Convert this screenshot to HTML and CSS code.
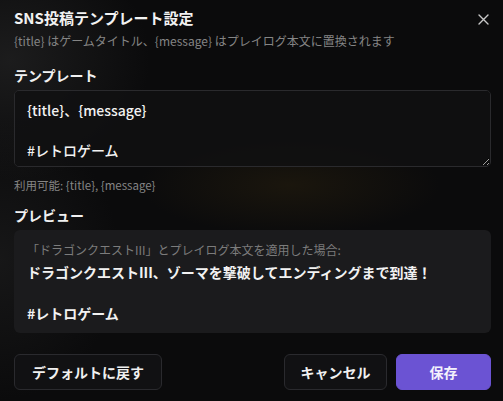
FILE: index.html
```html
<!DOCTYPE html>
<html lang="ja">
<head>
<meta charset="utf-8">
<title>SNS投稿テンプレート設定</title>
<link rel="stylesheet" href="styles.css">
</head>
<body>
<div class="dialog">
  <header class="head">
    <div class="head-text">
      <h1 class="title">SNS投稿テンプレート設定</h1>
      <p class="subtitle">{title} はゲームタイトル、{message} はプレイログ本文に置換されます</p>
    </div>
    <button class="close" aria-label="閉じる">
      <svg width="11" height="11" viewBox="0 0 11 11"><path d="M1 1L10 10M10 1L1 10" stroke="#c8c8c8" stroke-width="1.4" stroke-linecap="round"/></svg>
    </button>
  </header>

  <section class="field">
    <h2 class="label">テンプレート</h2>
    <textarea class="template">{title}、{message}

#レトロゲーム</textarea>
    <p class="hint">利用可能: {title}, {message}</p>
  </section>

  <section class="field">
    <h2 class="label preview-label">プレビュー</h2>
    <div class="preview">
      <p class="preview-note">「ドラゴンクエストIII」とプレイログ本文を適用した場合:</p>
      <p class="preview-body">ドラゴンクエストIII、ゾーマを撃破してエンディングまで到達！<br><br>#レトロゲーム</p>
    </div>
  </section>

  <footer class="actions">
    <button class="btn">デフォルトに戻す</button>
    <div class="right">
      <button class="btn cancel">キャンセル</button>
      <button class="btn primary">保存</button>
    </div>
  </footer>
</div>
</body>
</html>
```

FILE: styles.css
```css
html, body {
  margin: 0;
  padding: 0;
  height: 100%;
}
body {
  background:
    radial-gradient(ellipse 150px 50px at 290px 185px, rgba(55, 42, 15, 0.35), rgba(55, 42, 15, 0) 100%),
    radial-gradient(ellipse 140px 120px at 10px 60px, rgba(60, 60, 60, 0.35), rgba(60, 60, 60, 0) 100%),
    radial-gradient(ellipse 120px 140px at 0px 260px, rgba(50, 50, 50, 0.3), rgba(50, 50, 50, 0) 100%),
    #0b0b0c;
  font-family: "Noto Sans CJK JP", "Noto Sans", sans-serif;
  color: #f0f0f0;
  overflow: hidden;
}
.dialog {
  padding: 7px 12px 0 14px;
  display: flex;
  flex-direction: column;
}
.head {
  display: flex;
  justify-content: space-between;
  align-items: flex-start;
}
.title {
  margin: 0;
  font-size: 15px;
  line-height: 22px;
  font-weight: 700;
  color: #f2f2f2;
}
.subtitle {
  margin: 3px 0 0;
  font-size: 12px;
  line-height: 18px;
  color: #858585;
}
.close {
  background: none;
  border: none;
  padding: 0;
  margin: 5px 1px 0 0;
  width: 14px;
  height: 14px;
  display: flex;
  align-items: center;
  justify-content: center;
}
.field {
  display: flex;
  flex-direction: column;
}
.label {
  margin: 15px 0 5px;
  font-size: 14px;
  line-height: 20px;
  font-weight: 700;
  color: #f0f0f0;
}
.preview-label {
  margin-top: 11px;
}
.template {
  box-sizing: border-box;
  width: 477px;
  height: 77px;
  margin: 0;
  padding: 9px 12px;
  background: rgba(16, 16, 18, 0.85);
  border: 1px solid #2a2a2d;
  border-radius: 5px;
  color: #f2f2f2;
  font-family: "Noto Sans CJK JP", "Noto Sans", sans-serif;
  font-size: 14px;
  line-height: 20px;
  font-weight: 500;
  resize: vertical;
  outline: none;
}
.hint {
  margin: 9px 0 0;
  font-size: 11.5px;
  line-height: 18px;
  color: #858585;
}
.preview {
  box-sizing: border-box;
  width: 477px;
  height: 103px;
  padding: 11px 13px 0;
  background: #1b1b1d;
  border-radius: 6px;
}
.preview-note {
  margin: 0 0 3px;
  font-size: 12px;
  line-height: 18px;
  color: #7c7c7c;
}
.preview-body {
  margin: 0;
  font-size: 14px;
  line-height: 20.5px;
  font-weight: 700;
  color: #f2f2f2;
}
.actions {
  display: flex;
  justify-content: space-between;
  margin-top: 21px;
  width: 477px;
}
.right {
  display: flex;
  gap: 9px;
}
.btn {
  box-sizing: border-box;
  height: 36px;
  padding: 0 17px;
  background: #111113;
  border: 1px solid #2a2a2e;
  border-radius: 6px;
  color: #f0f0f0;
  font-family: "Noto Sans CJK JP", "Noto Sans", sans-serif;
  font-size: 14px;
  font-weight: 700;
}
.cancel {
  width: 103px;
  padding: 0;
}
.primary {
  width: 95px;
  padding: 0;
  background: #6b53d3;
  border-color: #6b53d3;
  color: #f4f2fc;
}
```
